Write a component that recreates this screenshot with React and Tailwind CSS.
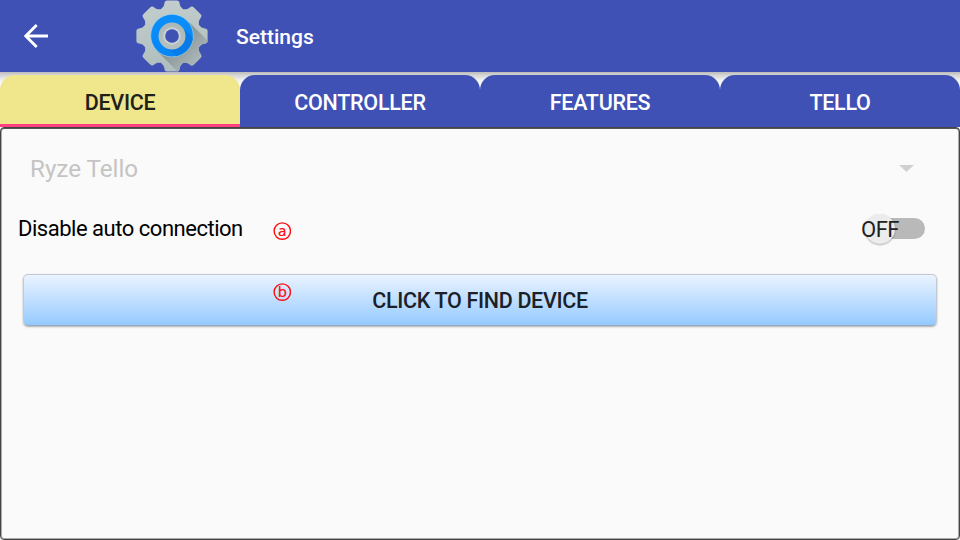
const TABS = ["DEVICE", "CONTROLLER", "FEATURES", "TELLO"];
const TEETH = [0, 45, 90, 135, 180, 225, 270, 315];

function GearIcon() {
  return (
    <svg className="h-[72px] w-[72px]" viewBox="0 0 72 72">
      <defs>
        <linearGradient id="body" gradientUnits="userSpaceOnUse" x1="30" y1="0" x2="42" y2="72">
          <stop offset="0" stopColor="#c3cdcd" />
          <stop offset="1" stopColor="#aebdbd" />
        </linearGradient>
        <linearGradient id="shade" gradientUnits="userSpaceOnUse" x1="40" y1="40" x2="60" y2="60">
          <stop offset="0" stopColor="#869293" />
          <stop offset="1" stopColor="#a8b4b5" />
        </linearGradient>
        <linearGradient id="blue" x1="0" y1="0" x2="0" y2="1">
          <stop offset="0" stopColor="#0a8ffa" />
          <stop offset="1" stopColor="#0785f5" />
        </linearGradient>
        <linearGradient id="ring" x1="0" y1="0" x2="0" y2="1">
          <stop offset="0" stopColor="#adb8b8" />
          <stop offset="1" stopColor="#b4c0c0" />
        </linearGradient>
        <clipPath id="gearClip">
          <circle cx="36" cy="36" r="28.5" />
          {TEETH.map((a) => (
            <path key={a} transform={`rotate(${a} 36 36)`} d="M23 11L26.500 7.500Q27.700 6.500 28 5L28.700 2Q29.200.400 31 .400H41Q42.800.400 43.300 2L44 5Q44.300 6.500 45.500 7.500L49 11Z" />
          ))}
        </clipPath>
        <clipPath id="blueClip">
          <circle cx="36" cy="35.600" r="21" />
        </clipPath>
      </defs>
      <g clipPath="url(#gearClip)">
        <rect width="72" height="72" fill="url(#body)" />
        <path d="M53 22L72 41V72H42L22 52Z" fill="url(#shade)" />
      </g>
      <circle cx="36" cy="35.600" r="21.300" fill="url(#blue)" stroke="#9fd2e8" strokeWidth=".700" />
      <path clipPath="url(#blueClip)" d="M46 27L64 45V62H48L27 45Z" fill="#077ce8" />
      <circle cx="36" cy="36" r="13.500" fill="url(#ring)" />
      <circle cx="36" cy="36" r="9" fill="#c6d0d0" />
      <circle cx="36" cy="36" r="6.800" fill="#3f51b5" />
    </svg>
  );
}

function Marker({ letter, className }) {
  return (
    <svg className={`absolute h-5 w-5 ${className}`} viewBox="0 0 20 20">
      <circle cx="11.300" cy="10.100" r="8.200" fill="none" stroke="#ff0a0f" strokeWidth="1.400" />
      <text x="11.300" y="15" textAnchor="middle" fill="#ff0a0f" stroke="#ff0a0f" strokeWidth=".2" className="font-['Noto_Sans',sans-serif] text-[15px]">
        {letter}
      </text>
    </svg>
  );
}

export default function App() {
  return (
    <div className="flex h-[540px] w-[960px] flex-col overflow-hidden bg-[#fafafa] font-[Roboto,sans-serif]">
      <header className="flex h-[72px] shrink-0 items-center bg-[#3f51b5] pl-6 text-white">
        <svg className="mr-[88px] h-6 w-6" viewBox="0 0 24 24">
          <path d="M24 12H2.500M12.700 1L1.700 12L12.700 23" fill="none" stroke="#fff" strokeWidth="2.900" />
        </svg>
        <GearIcon />
        <h1 className="ml-7 pt-0.5 text-[21px] leading-6 font-medium">Settings</h1>
      </header>
      <nav className="flex h-[55px] shrink-0 bg-[linear-gradient(#bbb_0px,#d4d4d4_3px,#f0f0f0_8px,#fafafa_12px)] pt-[3px]">
        {TABS.map((tab, i) => (
          <div
            key={tab}
            className={`flex w-60 items-center justify-center rounded-t-[15px] pt-1 text-[21.5px] font-medium tracking-[-0.28px] ${
              i === 0 ? "bg-[#f0e68c] text-[#20201a] shadow-[inset_0_-3px_#ff4081]" : "bg-[#3f51b5] text-white"
            }`}
          >
            {tab}
          </div>
        ))}
      </nav>
      <main className="relative flex flex-1 flex-col rounded-[4px] border border-[#444] pt-[23px] shadow-[inset_0_1px_#555,inset_0_0_0_1px_#aaa]">
        <div className="flex h-9 items-center justify-between pr-[45px] pl-[29px] text-[24.2px] text-[#c4c4c4]">
          <span>Ryze Tello</span>
          <svg className="mb-px h-[7px] w-[15px]" viewBox="0 0 15 7">
            <path d="M0 0H15L7.500 7Z" fill="#d0d0d0" />
          </svg>
        </div>
        <div className="mt-[23px] flex h-9 items-center justify-between pr-[34px] pl-[17px] text-[22px] text-black">
          <span className="tracking-[-0.48px]">Disable auto connection</span>
          <div className="relative flex h-8 w-[63px] items-center">
            <div className="ml-[9px] h-[21px] w-[54px] rounded-full bg-[#b9b9b9]" />
            <div className="absolute top-0.5 left-[3px] h-[30px] w-[30px] rounded-full bg-[#ececec] shadow-[0_1px_2px_rgba(0,0,0,0.3)]" />
            <span className="absolute top-0.5 -left-px leading-8 tracking-[-0.5px] text-[#212121]">OFF</span>
          </div>
        </div>
        <button className="mx-[22px] mt-7 flex h-[52px] items-center justify-center rounded-[5px] border border-[#c3c9d2] border-b-[#94a9c1] bg-linear-to-b from-[#eaf3ff] to-[#94caff] pt-0.5 text-[21.5px] font-medium tracking-[-0.33px] text-[#1b2127] shadow-[0_1px_2px_rgba(0,0,0,0.3)]">
          CLICK TO FIND DEVICE
        </button>
        <Marker letter="a" className="top-[93px] left-[270px]" />
        <Marker letter="b" className="top-[154px] left-[270px]" />
      </main>
    </div>
  );
}
